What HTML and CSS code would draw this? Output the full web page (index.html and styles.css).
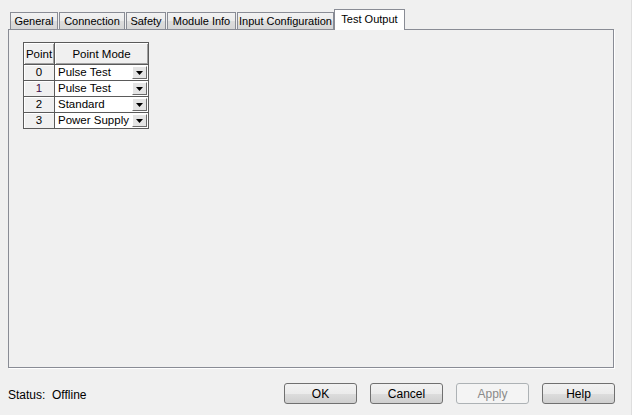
FILE: index.html
```html
<!DOCTYPE html>
<html lang="en">
<head>
    <meta charset="UTF-8">
    <title>Module Properties - Test Output</title>
    <link rel="stylesheet" href="styles.css">
</head>
<body>
    <div class="window">
        <!-- Tab strip -->
        <div class="tabs">
            <div class="tab" style="width: 48px">General</div>
            <div class="tab" style="width: 66px">Connection</div>
            <div class="tab" style="width: 40px">Safety</div>
            <div class="tab" style="width: 69px">Module Info</div>
            <div class="tab" style="width: 97px">Input Configuration</div>
            <div class="tab tab-active" style="width: 71px">Test Output</div>
        </div>

        <!-- Tab page -->
        <div class="panel">
            <table class="grid">
                <tr>
                    <th class="col-point">Point</th>
                    <th class="col-mode">Point Mode</th>
                </tr>
                <tr>
                    <td class="num">0</td>
                    <td class="mode"><div class="combo"><span>Pulse Test</span><span class="drop"><svg width="9" height="6" viewBox="0 0 9 6"><path d="M1 1h7l-3.5 4z" fill="#000"/></svg></span></div></td>
                </tr>
                <tr>
                    <td class="num num-alt">1</td>
                    <td class="mode"><div class="combo"><span>Pulse Test</span><span class="drop"><svg width="9" height="6" viewBox="0 0 9 6"><path d="M1 1h7l-3.5 4z" fill="#000"/></svg></span></div></td>
                </tr>
                <tr>
                    <td class="num">2</td>
                    <td class="mode"><div class="combo"><span>Standard</span><span class="drop"><svg width="9" height="6" viewBox="0 0 9 6"><path d="M1 1h7l-3.5 4z" fill="#000"/></svg></span></div></td>
                </tr>
                <tr>
                    <td class="num">3</td>
                    <td class="mode"><div class="combo"><span>Power Supply</span><span class="drop"><svg width="9" height="6" viewBox="0 0 9 6"><path d="M1 1h7l-3.5 4z" fill="#000"/></svg></span></div></td>
                </tr>
            </table>
        </div>

        <!-- Status and dialog buttons -->
        <div class="footer">
            <div class="status">Status:&nbsp; Offline</div>
            <div class="buttons">
                <button class="btn">OK</button>
                <button class="btn">Cancel</button>
                <button class="btn" disabled>Apply</button>
                <button class="btn">Help</button>
            </div>
        </div>
    </div>
</body>
</html>
```

FILE: styles.css
```css
body {
    margin: 0;
    background-color: #f0f0f0;
    font-family: 'Liberation Sans', Arial, sans-serif;
    font-size: 12px;
    color: #000;
}
.window {
    width: 632px;
    height: 415px;
    box-sizing: border-box;
    border-right: 1px solid #dedede;
    overflow: hidden;
}
.tabs {
    display: flex;
    align-items: flex-end;
    height: 29px;
    padding-left: 10px;
}
.tab {
    box-sizing: border-box;
    height: 17px;
    margin-right: 1px;
    border: 1px solid #898c95;
    border-bottom: none;
    background: linear-gradient(to bottom, #f2f2f2, #ebebeb 50%, #dddddd 50%, #d6d6d6);
    font-size: 11px;
    line-height: 16px;
    text-align: center;
    white-space: nowrap;
}
.tab-active {
    position: relative;
    z-index: 1;
    height: 21px;
    margin-bottom: -1px;
    margin-left: -1px;
    background: #fff;
    line-height: 18px;
}
.panel {
    box-sizing: border-box;
    width: 606px;
    height: 339px;
    margin-left: 8px;
    padding: 12px 0 0 14px;
    border: 1px solid #898c95;
    box-shadow: 1px 1px 0 #fff;
    background-color: #f0f0f0;
}
.grid {
    border-collapse: collapse;
    border: 1px solid #5a5a5a;
    font-size: 11.5px;
}
.grid th {
    height: 21px;
    padding: 0;
    border: 1px solid #5a5a5a;
    background-color: #f0f0f0;
    box-shadow: inset 1px 1px 0 #fff, inset -1px -1px 0 #a0a0a0;
    font-weight: normal;
}
.col-point {
    width: 30px;
}
.col-mode {
    width: 93px;
}
.grid td {
    height: 15px;
    padding: 0;
    border: 1px solid #5a5a5a;
}
.num {
    text-align: center;
    background-color: #f0f0f0;
    box-shadow: inset 1px 1px 0 #fff;
    line-height: 15px;
}
.num-alt {
    color: #3c0a46;
}
.mode {
    background-color: #fff;
}
.combo {
    display: flex;
    align-items: center;
    justify-content: space-between;
    height: 15px;
    padding-left: 3px;
    line-height: 15px;
}
.drop {
    display: flex;
    align-items: flex-end;
    justify-content: center;
    box-sizing: border-box;
    width: 15px;
    height: 13px;
    margin-right: 1px;
    padding-bottom: 2px;
    background-color: #e4e4e4;
    border-top: 1px solid #fff;
    border-left: 1px solid #fff;
    border-right: 1px solid #6a6a6a;
    border-bottom: 1px solid #6a6a6a;
}
.footer {
    display: flex;
    align-items: center;
    padding: 15px 16px 0 8px;
}
.status {
    padding-top: 2px;
}
.buttons {
    display: flex;
    gap: 13px;
    margin-left: auto;
}
.btn {
    width: 73px;
    height: 21px;
    padding: 0;
    border: 1px solid #707070;
    border-radius: 3px;
    background: linear-gradient(to bottom, #f2f2f2, #ebebeb 50%, #dddddd 50%, #cfcfcf);
    font-family: 'Liberation Sans', Arial, sans-serif;
    font-size: 12px;
    color: #000;
}
.btn:disabled {
    border-color: #adb2b5;
    background: #f4f4f4;
    color: #8a8a8a;
}
```
